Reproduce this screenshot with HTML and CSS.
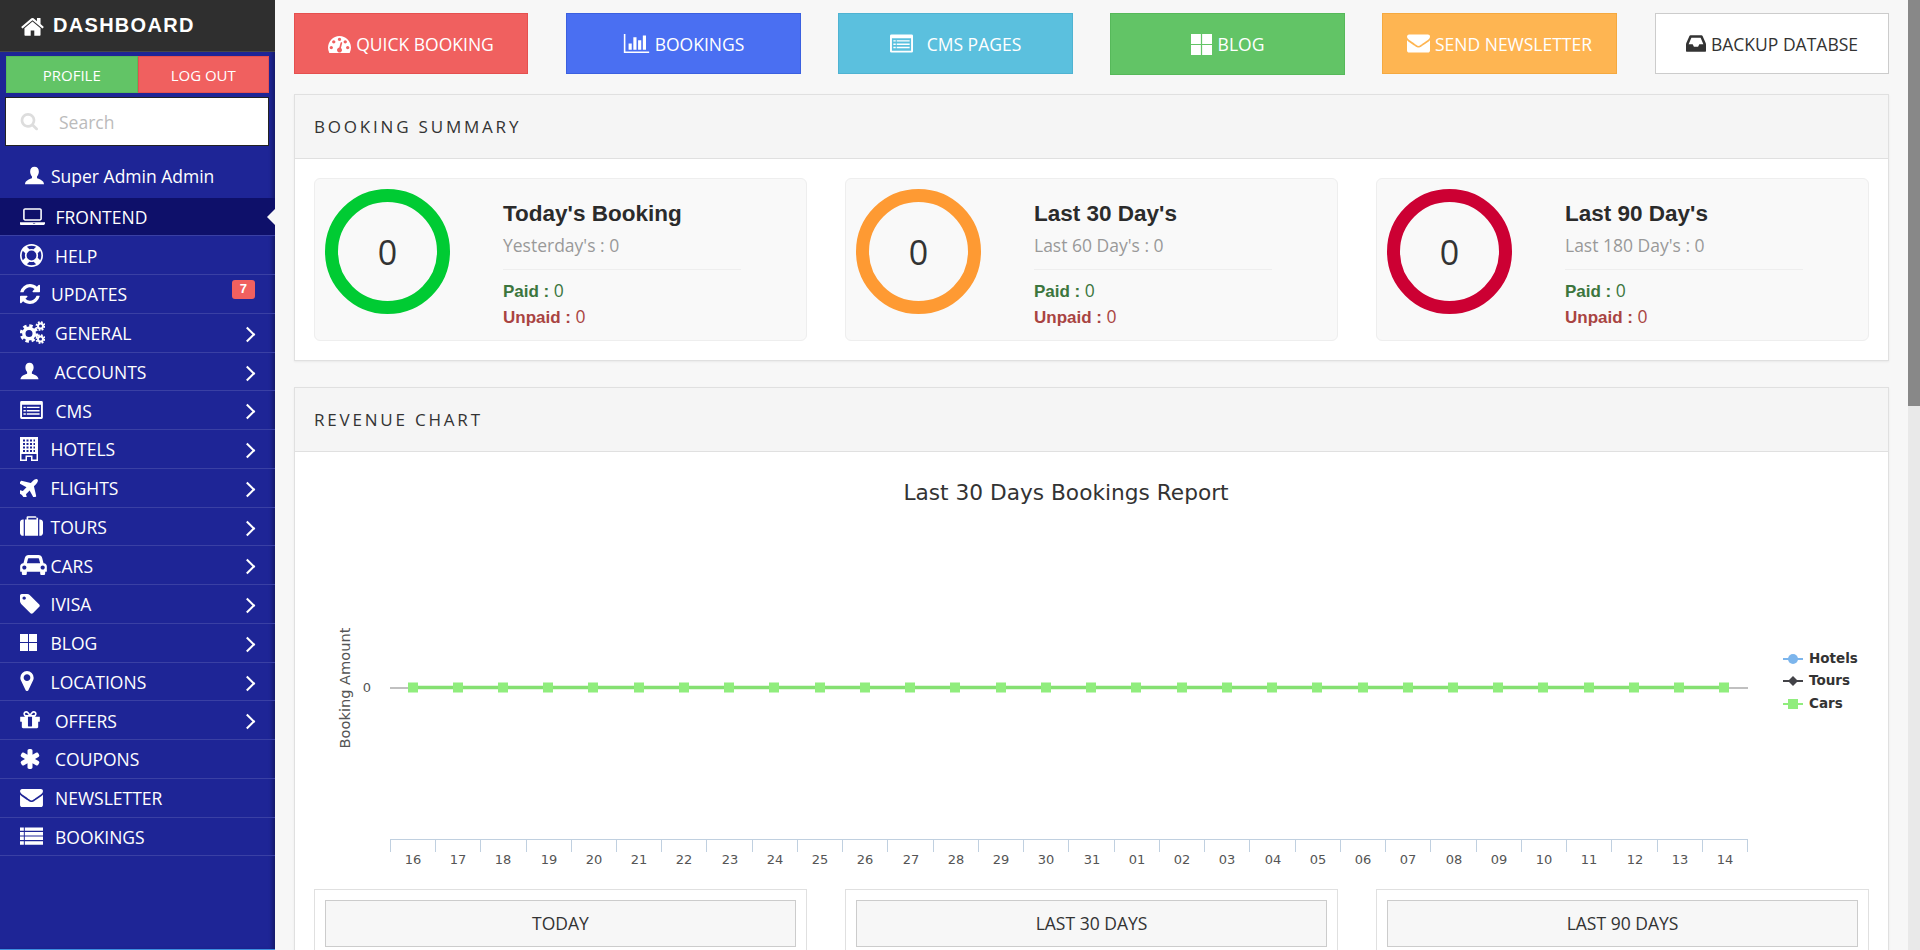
FILE: index.html
```html
<!DOCTYPE HTML>
<html lang="en">
<head>
	<title>Dashboard</title>
	<link rel="stylesheet" href="styles.css">
</head>
<body>
	<svg class="icon-defs" width="0" height="0">
		<symbol id="i-home" viewBox="0 128 1792 1408"><path d="M1472 992v480q0 26-19 45t-45 19h-384v-384h-256v384h-384q-26 0-45-19t-19-45v-480q0-1 .5-3t.5-3l575-474 575 474q1 2 1 6zm223-69l-62 74q-8 9-21 11h-3q-13 0-21-7l-692-577-692 577q-12 8-24 7-13-2-21-11l-62-74q-8-10-7-23.500t11-21.500l719-599q32-26 76-26t76 26l244 204v-195q0-14 9-23t23-9h192q14 0 23 9t9 23v408l219 182q10 8 11 21.500t-7 23.500z"/></symbol>
		<symbol id="i-user" viewBox="0 0 24 24"><path d="M12 1c3.400 0 5.500 2.500 5.500 6 0 2.600-1 4.800-2.300 6.200v2.300c3 1.200 8.800 2.800 8.800 7.500H0c0-4.700 5.800-6.300 8.800-7.500v-2.300C7.500 11.800 6.500 9.600 6.500 7c0-3.500 2.100-6 5.500-6z"/></symbol>
		<symbol id="i-laptop" viewBox="0 256 2048 1280"><path d="M416 1280q-66 0-113-47t-47-113v-704q0-66 47-113t113-47h1216q66 0 113 47t47 113v704q0 66-47 113t-113 47h-1216zm-32-864v704q0 13 9.500 22.500t22.500 9.500h1216q13 0 22.500-9.500t9.500-22.500v-704q0-13-9.500-22.500t-22.500-9.500h-1216q-13 0-22.500 9.500t-9.500 22.500zm1504 992h160v96q0 66-70.500 113t-169.500 47h-1600q-99 0-169.500-47t-70.500-113v-96h1888zm-656 96q16 0 16-16t-16-16h-160q-16 0-16 16t16 16h160z"/></symbol>
		<symbol id="i-ring" viewBox="0 0 1792 1792"><path d="M896 0q182 0 348 71t286 191 191 286 71 348-71 348-191 286-286 191-348 71-348-71-286-191-191-286-71-348 71-348 191-286 286-191 348-71zm0 128q-190 0-361 90l194 194q82-28 167-28t167 28l194-194q-171-90-361-90zm-678 1129l194-194q-28-82-28-167t28-167l-194-194q-90 171-90 361t90 361zm678 407q190 0 361-90l-194-194q-82 28-167 28t-167-28l-194 194q171 90 361 90zm0-384q159 0 271.500-112.500t112.500-271.500-112.500-271.500-271.500-112.500-271.500 112.500-112.500 271.500 112.500 271.500 271.500 112.500zm484-217l194 194q90-171 90-361t-90-361l-194 194q28 82 28 167t-28 167z"/></symbol>
		<symbol id="i-refresh" viewBox="128 128 1536 1536"><path d="M1639 1056q0 5-1 7-64 268-268 434.500t-478 166.500q-146 0-282.500-55t-243.500-157l-129 129q-19 19-45 19t-45-19-19-45v-448q0-26 19-45t45-19h448q26 0 45 19t19 45-19 45l-137 137q71 66 161 102t187 36q134 0 250-65t186-179q11-17 53-117 8-23 30-23h192q13 0 22.500 9.500t9.500 22.500zm25-800v448q0 26-19 45t-45 19h-448q-26 0-45-19t-19-45 19-45l138-138q-148-137-349-137-134 0-250 65t-186 179q-11 17-53 117-8 23-30 23h-199q-13 0-22.500-9.500t-9.500-22.500v-7q65-268 270-434.500t480-166.500q146 0 284 55.500t245 156.500l130-129q19-19 45-19t45 19 19 45z"/></symbol>
		<symbol id="i-cogs" viewBox="0 0 25 23">
			<circle cx="9" cy="12.500" r="5.200" fill="none" stroke="currentColor" stroke-width="3.400"/>
			<circle cx="9" cy="12.500" r="7.700" fill="none" stroke="currentColor" stroke-width="3" stroke-dasharray="3.400 2.650"/>
			<circle cx="20.500" cy="5" r="2.500" fill="none" stroke="currentColor" stroke-width="2"/>
			<circle cx="20.500" cy="5" r="4" fill="none" stroke="currentColor" stroke-width="1.800" stroke-dasharray="1.800 1.340"/>
			<circle cx="20.500" cy="18" r="2.500" fill="none" stroke="currentColor" stroke-width="2"/>
			<circle cx="20.500" cy="18" r="4" fill="none" stroke="currentColor" stroke-width="1.800" stroke-dasharray="1.800 1.340"/>
		</symbol>
		<symbol id="i-cms" viewBox="0 0 24 19"><path fill-rule="evenodd" d="M1.500 0h21A1.500 1.500 0 0 1 24 1.500v16a1.500 1.500 0 0 1-1.500 1.500h-21A1.500 1.500 0 0 1 0 17.500v-16A1.500 1.500 0 0 1 1.500 0zM2 4v13h20V4zM3.500 6H6v1.500H3.500zM7 6h13.500v1.500H7zM3.500 9.500H6V11H3.500zM7 9.500h13.500V11H7zM3.500 13H6v1.500H3.500zM7 13h13.500v1.500H7z"/></symbol>
		<symbol id="i-hotel" viewBox="0 0 18 24"><path fill-rule="evenodd" d="M0 0h18v24H11v-4H7v4H0zM3 2.500v2h2v-2zm3.500 0v2h2v-2zm3.500 0v2h2v-2zm3.500 0v2h1.500v-2zM3 6v2h2V6zm3.500 0v2h2V6zM10 6v2h2V6zm3.500 0v2h1.500V6zM3 9.500v2h2v-2zm3.500 0v2h2v-2zm3.500 0v2h2v-2zm3.500 0v2h1.500v-2zM3 13v2h2v-2zm3.500 0v2h2v-2zm3.500 0v2h2v-2zm3.500 0v2h1.500v-2zM1.500 22.500H5.500V18.500h7v4h4V17h-15z"/></symbol>
		<symbol id="i-plane" viewBox="128 128 1280 1280"><path d="M1376 160q44 52 12 148t-108 172l-161 161 160 696q5 19-12 33l-128 96q-7 6-19 6-4 0-7-1-15-3-21-16l-279-508-259 259 53 194q5 17-8 31l-96 96q-9 9-23 9h-2q-15-2-24-13l-189-252-252-189q-11-7-13-23-1-13 9-25l96-97q9-9 23-9 6 0 8 1l194 53 259-259-508-279q-14-8-17-24-2-16 9-27l128-128q14-13 30-8l665 159 160-160q76-76 172-108t148 12z"/></symbol>
		<symbol id="i-suitcase" viewBox="0 128 1792 1536"><path d="M640 384h768v-128h-768v128zm-352 0v1280h-64q-92 0-158-66t-66-158v-832q0-92 66-158t158-66h64zm1120 0v1280h-1024v-1280h128v-160q0-40 28-68t68-28h576q40 0 68 28t28 68v160h128zm384 224v832q0 92-66 158t-158 66h-64v-1280h64q92 0 158 66t66 158z"/></symbol>
		<symbol id="i-car" viewBox="0 128 2048 1536"><path d="M480 1088q0-66-47-113t-113-47-113 47-47 113 47 113 113 47 113-47 47-113zm36-320h1016l-89-357q-2-8-14-17.500t-21-9.500h-768q-9 0-21 9.500t-14 17.500zm1372 320q0-66-47-113t-113-47-113 47-47 113 47 113 113 47 113-47 47-113zm160-96v384q0 14-9 23t-23 9h-96v128q0 80-56 136t-136 56-136-56-56-136v-128h-1024v128q0 80-56 136t-136 56-136-56-56-136v-128h-96q-14 0-23-9t-9-23v-384q0-93 65.500-158.500t158.500-65.500h28l105-419q23-94 104-157.500t179-63.500h768q98 0 179 63.500t104 157.500l105 419h28q93 0 158.500 65.500t65.500 158.500z"/></symbol>
		<symbol id="i-tag" viewBox="128 128 1536 1536"><path d="M576 448q0-53-37.500-90.500t-90.500-37.500-90.500 37.500-37.500 90.500 37.500 90.500 90.500 37.500 90.500-37.500 37.500-90.500zm1067 576q0 53-37 90l-491 492q-39 37-91 37-53 0-90-37l-715-716q-38-37-64.500-101t-26.500-117v-416q0-52 38-90t90-38h416q53 0 117 26.500t102 64.500l715 714q37 39 37 91z"/></symbol>
		<symbol id="i-blog" viewBox="0 0 17 17"><path d="M0 0h8v8H0zM9 0h8v8H9zM0 9h8v8H0zM9 9h8v8H9z"/></symbol>
		<symbol id="i-marker" viewBox="384 128 1024 1536"><path d="M1152 640q0-106-75-181t-181-75-181 75-75 181 75 181 181 75 181-75 75-181zm256 0q0 109-33 179l-364 774q-16 33-47.500 52t-67.500 19-67.500-19-46.500-52l-365-774q-33-70-33-179 0-212 150-362t362-150 362 150 150 362z"/></symbol>
		<symbol id="i-gift" viewBox="128 192 1536 1408"><path d="M1056 1356v-716h-320v716q0 25 18 38.500t46 13.500h192q28 0 46-13.500t18-38.500zm-456-844h195l-126-161q-26-31-69-31-40 0-68 28t-28 68 28 68 68 28zm688-96q0-40-28-68t-68-28q-43 0-69 31l-125 161h194q40 0 68-28t28-68zm376 256v320q0 14-9 23t-23 9h-96v416q0 40-28 68t-68 28h-1088q-40 0-68-28t-28-68v-416h-96q-14 0-23-9t-9-23v-320q0-14 9-23t23-9h440q-93 0-158.500-65.500t-65.500-158.500 65.500-158.500 158.500-65.500q107 0 168 77l128 165 128-165q61-77 168-77 93 0 158.500 65.500t65.500 158.500-65.500 158.500-158.500 65.500h440q14 0 23 9t9 23z"/></symbol>
		<symbol id="i-asterisk" viewBox="128 128 1536 1536"><path d="M1546 1050q46 26 59.500 77.500t-12.500 97.500l-64 110q-26 46-77.500 59.500t-97.500-12.500l-266-153v307q0 52-38 90t-90 38h-128q-52 0-90-38t-38-90v-307l-266 153q-46 26-97.500 12.500t-77.500-59.500l-64-110q-26-46-12.500-97.500t59.500-77.500l266-154-266-154q-46-26-59.500-77.500t12.500-97.500l64-110q26-46 77.500-59.500t97.500 12.500l266 153v-307q0-52 38-90t90-38h128q52 0 90 38t38 90v307l266-153q46-26 97.500-12.500t77.500 59.500l64 110q26 46 12.500 97.500t-59.500 77.500l-266 154z"/></symbol>
		<symbol id="i-envelope" viewBox="0 256 1792 1408"><path d="M1792 710v794q0 66-47 113t-113 47h-1472q-66 0-113-47t-47-113v-794q44 49 101 87 362 246 497 345 57 42 92.500 65.500t94.500 48 110 24.500h2q51 0 110-24.500t94.500-48 92.500-65.500q170-123 498-345 57-39 100-87zm0-294q0 79-49 151t-122 123q-376 261-468 325-10 7-42.500 30.500t-54 38-52 32.500-57.500 27-50 9h-2q-23 0-50-9t-57.500-27-52-32.500-54-38-42.500-30.500q-91-64-262-182.500t-205-142.500q-62-42-117-115.500t-55-136.500q0-78 41.500-130t118.500-52h1472q65 0 112.500 47t47.500 113z"/></symbol>
		<symbol id="i-list" viewBox="0 0 24 18"><path d="M0 0h4v3.600H0zM5 0h19v3.600H5zM0 4.800h4v3.600H0zM5 4.800h19v3.600H5zM0 9.600h4v3.600H0zM5 9.600h19v3.600H5zM0 14.400h4V18H0zM5 14.400h19V18H5z"/></symbol>
		<symbol id="i-gauge" viewBox="0 128 1792 1408"><path d="M384 1152q0-53-37.500-90.500t-90.500-37.500-90.500 37.500-37.500 90.500 37.500 90.500 90.500 37.500 90.500-37.500 37.500-90.500zm192-448q0-53-37.500-90.500t-90.500-37.500-90.500 37.500-37.500 90.500 37.500 90.500 90.500 37.500 90.500-37.500 37.500-90.500zm428 481l101-382q6-26-7.500-48.500t-38.500-29.500-48 6.500-30 39.500l-101 382q-60 5-107 43.500t-63 98.500q-20 77 20 146t117 89 146-20 89-117q16-60-6-117t-72-91zm660-33q0-53-37.500-90.500t-90.500-37.500-90.500 37.500-37.500 90.500 37.500 90.500 90.500 37.500 90.500-37.500 37.500-90.500zm-640-640q0-53-37.500-90.500t-90.500-37.500-90.500 37.500-37.500 90.500 37.500 90.500 90.500 37.500 90.500-37.500 37.500-90.500zm448 192q0-53-37.500-90.500t-90.500-37.500-90.500 37.500-37.500 90.500 37.500 90.500 90.500 37.500 90.500-37.500 37.500-90.500zm320 448q0 261-141 483-19 29-54 29h-1402q-35 0-54-29-141-221-141-483 0-182 71-348t191-286 286-191 348-71 348 71 286 191 191 286 71 348z"/></symbol>
		<symbol id="i-bars" viewBox="0 128 2048 1536"><path d="M640 896v512h-256v-512h256zm384-512v1024h-256v-1024h256zm1024 1152v128h-2048v-1536h128v1408h1920zm-640-896v768h-256v-768h256zm384-384v1152h-256v-1152h256z"/></symbol>
		<symbol id="i-inbox" viewBox="0 256 1536 1280"><path d="M1023 960h316q-1-3-2.500-8.500t-2.500-7.500l-212-496h-708l-212 496q-1 3-2.500 8.500t-2.500 7.500h316l95 192h320zm513 30v482q0 26-19 45t-45 19h-1408q-26 0-45-19t-19-45v-482q0-62 25-123l238-552q10-25 36.500-42t52.500-17h832q26 0 52.500 17t36.500 42l238 552q25 61 25 123z"/></symbol>
		<symbol id="i-search" viewBox="0 128 1728 1728"><path d="M1216 832q0-185-131.500-316.500t-316.500-131.500-316.500 131.500-131.500 316.500 131.500 316.500 316.500 131.500 316.500-131.500 131.500-316.500zm512 832q0 52-38 90t-90 38q-54 0-90-38l-343-342q-179 124-399 124-143 0-273.500-55.500t-225-150-150-225-55.500-273.500 55.500-273.500 150-225 225-150 273.500-55.500 273.500 55.500 225 150 150 225 55.500 273.500q0 220-124 399l343 343q37 37 37 90z"/></symbol>
	</svg>

	<div class="layout">
		<aside class="sidebar">
			<div class="brand"><svg class="brand-icon"><use href="#i-home"/></svg>DASHBOARD</div>
			<div class="account-btns">
				<a class="account-btn account-profile">PROFILE</a>
				<a class="account-btn account-logout">LOG OUT</a>
			</div>
			<div class="search">
				<svg class="search-icon"><use href="#i-search"/></svg>
				<span class="search-text">Search</span>
			</div>
			<div class="user"><svg class="user-icon"><use href="#i-user"/></svg>Super Admin Admin</div>
			<ul class="nav">
				<li class="nav-item nav-active"><span class="nav-slot slot-36"><svg class="ico w25 h18"><use href="#i-laptop"/></svg></span>FRONTEND</li>
				<li class="nav-item"><span class="nav-slot slot-35"><svg class="ico w23 h23"><use href="#i-ring"/></svg></span>HELP</li>
				<li class="nav-item"><span class="nav-slot slot-31"><svg class="ico w20 h20"><use href="#i-refresh"/></svg></span>UPDATES<span class="badge">7</span></li>
				<li class="nav-item nav-more"><span class="nav-slot slot-35"><svg class="ico w25 h23"><use href="#i-cogs"/></svg></span>GENERAL</li>
				<li class="nav-item nav-more"><span class="nav-slot slot-34"><svg class="ico w19 h18"><use href="#i-user"/></svg></span>ACCOUNTS</li>
				<li class="nav-item nav-more"><span class="nav-slot slot-36"><svg class="ico w23 h18"><use href="#i-cms"/></svg></span>CMS</li>
				<li class="nav-item nav-more"><span class="nav-slot slot-30"><svg class="ico w18 h24"><use href="#i-hotel"/></svg></span>HOTELS</li>
				<li class="nav-item nav-more"><span class="nav-slot slot-30"><svg class="ico w18 h18"><use href="#i-plane"/></svg></span>FLIGHTS</li>
				<li class="nav-item nav-more"><span class="nav-slot slot-30"><svg class="ico w23 h20"><use href="#i-suitcase"/></svg></span>TOURS</li>
				<li class="nav-item nav-more"><span class="nav-slot slot-30"><svg class="ico w27 h20"><use href="#i-car"/></svg></span>CARS</li>
				<li class="nav-item nav-more"><span class="nav-slot slot-30"><svg class="ico w20 h20"><use href="#i-tag"/></svg></span>IVISA</li>
				<li class="nav-item nav-more"><span class="nav-slot slot-30"><svg class="ico w17 h17"><use href="#i-blog"/></svg></span>BLOG</li>
				<li class="nav-item nav-more"><span class="nav-slot slot-30"><svg class="ico w14 h20"><use href="#i-marker"/></svg></span>LOCATIONS</li>
				<li class="nav-item nav-more"><span class="nav-slot slot-35"><svg class="ico w20 h18"><use href="#i-gift"/></svg></span>OFFERS</li>
				<li class="nav-item"><span class="nav-slot slot-35"><svg class="ico w20 h20"><use href="#i-asterisk"/></svg></span>COUPONS</li>
				<li class="nav-item"><span class="nav-slot slot-35"><svg class="ico w23 h18"><use href="#i-envelope"/></svg></span>NEWSLETTER</li>
				<li class="nav-item"><span class="nav-slot slot-35"><svg class="ico w23 h18"><use href="#i-list"/></svg></span>BOOKINGS</li>
			</ul>
		</aside>

		<main class="main">
			<div class="quick">
				<a class="quick-btn quick-red"><svg class="quick-icon w23"><use href="#i-gauge"/></svg>QUICK BOOKING</a>
				<a class="quick-btn quick-blue"><svg class="quick-icon w27"><use href="#i-bars"/></svg>BOOKINGS</a>
				<a class="quick-btn quick-cyan"><svg class="quick-icon w23 quick-icon-far"><use href="#i-cms"/></svg>CMS PAGES</a>
				<a class="quick-btn quick-green"><svg class="quick-icon quick-icon-blog"><use href="#i-blog"/></svg>BLOG</a>
				<a class="quick-btn quick-orange"><svg class="quick-icon w23"><use href="#i-envelope"/></svg>SEND NEWSLETTER</a>
				<a class="quick-btn quick-white"><svg class="quick-icon w20"><use href="#i-inbox"/></svg>BACKUP DATABSE</a>
			</div>

			<section class="panel panel-summary">
				<h2 class="panel-title">BOOKING SUMMARY</h2>
				<div class="panel-body cards">
					<div class="card">
						<div class="ring ring-green">0</div>
						<div class="card-info">
							<h3 class="card-title">Today's Booking</h3>
							<p class="card-sub">Yesterday's : 0</p>
							<p class="card-paid"><b>Paid :</b> 0</p>
							<p class="card-unpaid"><b>Unpaid :</b> 0</p>
						</div>
					</div>
					<div class="card">
						<div class="ring ring-orange">0</div>
						<div class="card-info">
							<h3 class="card-title">Last 30 Day's</h3>
							<p class="card-sub">Last 60 Day's : 0</p>
							<p class="card-paid"><b>Paid :</b> 0</p>
							<p class="card-unpaid"><b>Unpaid :</b> 0</p>
						</div>
					</div>
					<div class="card">
						<div class="ring ring-red">0</div>
						<div class="card-info">
							<h3 class="card-title">Last 90 Day's</h3>
							<p class="card-sub">Last 180 Day's : 0</p>
							<p class="card-paid"><b>Paid :</b> 0</p>
							<p class="card-unpaid"><b>Unpaid :</b> 0</p>
						</div>
					</div>
				</div>
			</section>

			<section class="panel panel-revenue">
				<h2 class="panel-title">REVENUE CHART</h2>
				<div class="panel-body">
					<svg class="chart" width="1593" height="438" viewBox="294 451 1593 438">
						<text class="chart-title" x="1066" y="500" text-anchor="middle">Last 30 Days Bookings Report</text>
						<text class="chart-axis-title" transform="translate(350 688) rotate(-90)" text-anchor="middle">Booking Amount</text>
						<text class="chart-label" x="367" y="692" text-anchor="middle">0</text>
						<path class="chart-zero" d="M390 688H1748"/>
						<path class="chart-ticks" d="M390 839.500H1748M390.500 839V852M435.500 839V852M480.500 839V852M526.500 839V852M571.500 839V852M616.500 839V852M661.500 839V852M706.500 839V852M752.500 839V852M797.500 839V852M842.500 839V852M887.500 839V852M933.500 839V852M978.500 839V852M1023.500 839V852M1068.500 839V852M1114.500 839V852M1159.500 839V852M1204.500 839V852M1249.500 839V852M1295.500 839V852M1340.500 839V852M1385.500 839V852M1430.500 839V852M1476.500 839V852M1521.500 839V852M1566.500 839V852M1611.500 839V852M1657.500 839V852M1702.500 839V852M1747.500 839V852"/>
						<path class="chart-series" d="M413 687.500H1724"/>
						<path class="chart-dots" d="M413 687.500h0M458 687.500h0M503 687.500h0M548 687.500h0M593 687.500h0M639 687.500h0M684 687.500h0M729 687.500h0M774 687.500h0M820 687.500h0M865 687.500h0M910 687.500h0M955 687.500h0M1001 687.500h0M1046 687.500h0M1091 687.500h0M1136 687.500h0M1182 687.500h0M1227 687.500h0M1272 687.500h0M1317 687.500h0M1363 687.500h0M1408 687.500h0M1453 687.500h0M1498 687.500h0M1543 687.500h0M1589 687.500h0M1634 687.500h0M1679 687.500h0M1724 687.500h0"/>
						<g class="chart-label" text-anchor="middle">
							<text x="413" y="864">16</text><text x="458" y="864">17</text><text x="503" y="864">18</text><text x="549" y="864">19</text><text x="594" y="864">20</text><text x="639" y="864">21</text><text x="684" y="864">22</text><text x="730" y="864">23</text><text x="775" y="864">24</text><text x="820" y="864">25</text><text x="865" y="864">26</text><text x="911" y="864">27</text><text x="956" y="864">28</text><text x="1001" y="864">29</text><text x="1046" y="864">30</text><text x="1092" y="864">31</text><text x="1137" y="864">01</text><text x="1182" y="864">02</text><text x="1227" y="864">03</text><text x="1273" y="864">04</text><text x="1318" y="864">05</text><text x="1363" y="864">06</text><text x="1408" y="864">07</text><text x="1454" y="864">08</text><text x="1499" y="864">09</text><text x="1544" y="864">10</text><text x="1589" y="864">11</text><text x="1635" y="864">12</text><text x="1680" y="864">13</text><text x="1725" y="864">14</text>
						</g>
						<path class="legend-line" stroke="#7cb5ec" d="M1783 659h20"/>
						<circle cx="1793" cy="659" r="5" fill="#7cb5ec"/>
						<path class="legend-line" stroke="#434348" d="M1783 681h20"/>
						<path d="M1793 676l5 5-5 5-5-5z" fill="#434348"/>
						<path class="legend-line" stroke="#90ed7d" d="M1783 704h20"/>
						<path d="M1788 699h10v10h-10z" fill="#90ed7d"/>
						<text class="legend-text" x="1809" y="663">Hotels</text>
						<text class="legend-text" x="1809" y="685">Tours</text>
						<text class="legend-text" x="1809" y="708">Cars</text>
					</svg>
					<div class="cards">
						<div class="total"><div class="total-head">TODAY</div></div>
						<div class="total"><div class="total-head">LAST 30 DAYS</div></div>
						<div class="total"><div class="total-head">LAST 90 DAYS</div></div>
					</div>
				</div>
			</section>
		</main>

		<div class="scrollbar"><div class="scrollbar-thumb"></div></div>
	</div>
</body>
</html>
```

FILE: styles.css
```css
* {
	box-sizing:border-box;
	}
html, body {
	height:100%;
	}
body {
	margin:0;
	overflow:hidden;
	background:#f7f7f7;
	color:#333;
	font-family:"Open Sans", sans-serif;
	}
h2, h3, p, ul {
	margin:0;
	padding:0;
	}
svg {
	display:block;
	fill:currentColor;
	}
.icon-defs {
	position:absolute;
	}
.layout {
	display:flex;
	height:100vh;
	}

/* Sidebar */
.sidebar {
	flex:0 0 275px;
	background:#1e2596;
	border-bottom:1px solid #3f8fe0;
	box-shadow:inset -4px 0 4px -2px rgba(0,0,0,.35);
	color:#fff;
	}
.brand {
	display:flex;
	align-items:center;
	gap:8px;
	height:52px;
	padding-left:20px;
	background:#2f2f2f;
	border-bottom:1px solid #484848;
	font:bold 20px "Liberation Sans", sans-serif;
	letter-spacing:1.3px;
	}
.brand-icon {
	width:25px;
	height:20px;
	}
.account-btns {
	display:flex;
	margin:4px 6px 0;
	}
.account-btn {
	flex:1;
	height:37px;
	border:1px solid transparent;
	font-size:15px;
	line-height:36px;
	text-align:center;
	}
.account-profile {
	background:#62c466;
	border-color:#58b95c;
	}
.account-logout {
	background:#f0605f;
	border-color:#e5504f;
	}
.search {
	display:flex;
	align-items:center;
	height:49px;
	margin:4px 6px 0 5px;
	padding-left:14px;
	background:#fff;
	border:1px solid #222;
	}
.search-icon {
	width:18px;
	height:18px;
	color:#ddd;
	}
.search-text {
	margin-left:21px;
	color:#bbb;
	font-size:17.500px;
	}
.user {
	display:flex;
	align-items:center;
	height:51.500px;
	padding:8px 0 0 25px;
	font-size:17.500px;
	}
.user-icon {
	width:19px;
	height:19px;
	margin-right:7px;
	}

/* Nav */
.nav {
	list-style:none;
	}
.nav-item {
	position:relative;
	display:flex;
	align-items:center;
	height:38.750px;
	padding:1px 20px 0;
	border-bottom:1px solid #3a40a4;
	font-size:17.500px;
	}
.nav-slot {
	display:flex;
	align-items:center;
	flex:none;
	margin-top:-1px;
	}
.slot-30 { width:30.500px; }
.slot-31 { width:31px; }
.slot-34 { width:34.500px; }
.slot-35 { width:35px; }
.slot-36 { width:35.500px; }
.ico { flex:none; }
.w14 { width:14px; }
.w17 { width:17px; }
.w18 { width:18px; }
.w19 { width:19px; }
.w20 { width:20px; }
.w23 { width:23px; }
.w25 { width:25px; }
.w27 { width:27px; }
.h17 { height:17px; }
.h18 { height:18px; }
.h20 { height:20px; }
.h23 { height:23px; }
.h24 { height:24px; }
.nav-active {
	background:#0e106a;
	}
.nav-active:after {
	position:absolute;
	right:0;
	top:11px;
	border:8px solid transparent;
	border-right-color:#f7f7f7;
	border-left-width:0;
	content:'';
	}
.nav-more:after {
	position:absolute;
	right:22px;
	top:15px;
	width:9px;
	height:9px;
	border-top:2px solid #fff;
	border-right:2px solid #fff;
	transform:rotate(45deg);
	content:'';
	}
.badge {
	margin-left:auto;
	padding:0 8px;
	height:19px;
	margin-top:-10px;
	background:#f0605f;
	border-radius:3px;
	font:bold 13px/17px "Liberation Sans", sans-serif;
	}

/* Main */
.main {
	flex:1;
	overflow:hidden;
	padding:13px 19px 0;
	}
.scrollbar {
	flex:0 0 12px;
	background:#e9e9e9;
	}
.scrollbar-thumb {
	height:406px;
	background:#888;
	}

/* Quick buttons */
.quick {
	display:grid;
	grid-template-columns:repeat(6, 235px);
	gap:37px;
	align-items:start;
	height:61px;
	}
.quick-btn {
	display:flex;
	align-items:center;
	justify-content:center;
	height:61px;
	border:1px solid transparent;
	color:#fff;
	font-size:17.500px;
	}
.quick-icon {
	height:19px;
	margin-right:5px;
	}
.quick-icon-far {
	margin-right:14px;
	}
.quick-icon-blog {
	width:21px;
	height:21px;
	margin-right:6px;
	}
.quick-red { margin-right:1px; background:#f0605f; border-color:#e5504f; }
.quick-blue { background:#4a6ff2; border-color:#3b60e0; }
.quick-cyan { background:#5bc0de; border-color:#4fb3d2; }
.quick-green { height:62px; background:#62c466; border-color:#56b95a; }
.quick-orange { background:#feb552; border-color:#f5a940; }
.quick-white { margin-left:1px; background:#fff; border-color:#ccc; color:#333; }

/* Panels */
.panel {
	background:#fff;
	border:1px solid #e0e0e0;
	box-shadow:0 1px 2px rgba(0,0,0,.06);
	}
.panel-summary {
	margin-top:20px;
	height:267px;
	}
.panel-revenue {
	margin-top:26px;
	}
.panel-title {
	height:64px;
	padding-left:19px;
	background:#f5f5f5;
	border-bottom:1px solid #e0e0e0;
	font-size:17px;
	font-weight:400;
	letter-spacing:2.800px;
	line-height:63px;
	}
.panel-body {
	padding:19px 19px 0;
	}
.cards {
	display:grid;
	grid-template-columns:repeat(3, 493px);
	gap:38px;
	}

/* Summary cards */
.card {
	display:flex;
	height:163px;
	padding:10px;
	background:#f9f9f9;
	border:1px solid #eee;
	border-radius:6px;
	}
.ring {
	flex:none;
	width:125px;
	height:125px;
	border:13px solid;
	border-radius:50%;
	color:#333;
	font-size:34px;
	line-height:100px;
	text-align:center;
	}
.ring-green { border-color:#00cb33; }
.ring-orange { border-color:#fe9a33; }
.ring-red { border-color:#cc0033; }
.card-info {
	width:238px;
	margin-left:53px;
	padding-top:10px;
	}
.card-title {
	font:bold 22.500px/30px "Liberation Sans", sans-serif;
	color:#2b2b2b;
	}
.card-sub {
	padding:4px 0 12px;
	border-bottom:1px solid #eee;
	color:#999;
	font-size:17.500px;
	line-height:24px;
	}
.card-paid, .card-unpaid {
	font-size:17.500px;
	line-height:26px;
	}
.card-paid {
	margin-top:7px;
	color:#3c763d;
	}
.card-unpaid {
	color:#a94442;
	}
.card-paid b, .card-unpaid b {
	font-family:"Liberation Sans", sans-serif;
	font-size:17px;
	line-height:1;
	}

/* Chart */
.chart {
	margin:-20px 0 0 -20px;
	}
.chart-title {
	fill:#333;
	font:21.700px "DejaVu Sans", sans-serif;
	}
.chart-axis-title {
	fill:#555;
	font:14.600px "DejaVu Sans", sans-serif;
	}
.chart-label {
	fill:#555;
	font:13px "DejaVu Sans", sans-serif;
	}
.chart-zero {
	fill:none;
	stroke:#c0c0c0;
	stroke-width:2;
	}
.chart-ticks {
	fill:none;
	stroke:#c0d0e0;
	}
.chart-series {
	fill:none;
	stroke:#85e072;
	stroke-width:3.500;
	}
.chart-dots {
	fill:none;
	stroke:#90ed7d;
	stroke-width:10;
	stroke-linecap:square;
	}
.legend-line {
	fill:none;
	stroke-width:2;
	}
.legend-text {
	fill:#333;
	font:bold 13.500px "DejaVu Sans", sans-serif;
	}

/* Totals */
.total {
	height:200px;
	padding:10px;
	background:#fff;
	border:1px solid #e0e0e0;
	}
.total-head {
	height:47px;
	background:#f7f7f7;
	border:1px solid #ccc;
	font-size:17.500px;
	line-height:45px;
	text-align:center;
	}
```
